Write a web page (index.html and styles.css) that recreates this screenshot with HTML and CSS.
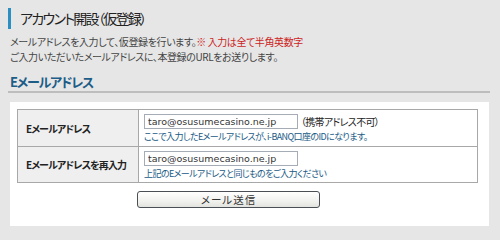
FILE: index.html
```html
<!DOCTYPE html>
<html lang="ja">
<head>
<meta charset="utf-8">
<title>アカウント開設（仮登録）</title>
<link rel="stylesheet" href="styles.css">
</head>
<body>
<div class="page">
  <h1 class="title">アカウント開設（仮登録）</h1>
  <p class="lead">メールアドレスを入力して、仮登録を行います。<span class="red">※ 入力は全て半角英数字</span><br>ご入力いただいたメールアドレスに、本登録のURLをお送りします。</p>
  <h2 class="sec">Eメールアドレス</h2>
  <div class="panel">
    <table class="form">
      <tr class="row1">
        <th>Eメールアドレス</th>
        <td>
          <div class="line"><span class="input">taro@osusumecasino.ne.jp</span><span class="note">（携帯アドレス不可）</span></div>
          <div class="hint">ここで入力したEメールアドレスが、i-BANQ口座のIDになります。</div>
        </td>
      </tr>
      <tr class="row2">
        <th>Eメールアドレスを再入力</th>
        <td>
          <div class="line"><span class="input">taro@osusumecasino.ne.jp</span></div>
          <div class="hint">上記のEメールアドレスと同じものをご入力ください</div>
        </td>
      </tr>
    </table>
    <div class="actions"><button class="btn" type="button">メール送信</button></div>
  </div>
</div>
</body>
</html>
```

FILE: styles.css
```css
html, body {
  margin: 0;
  padding: 0;
}
body {
  background: #e6e6e6;
  font-family: "Noto Sans CJK JP", "Noto Sans", sans-serif;
  font-feature-settings: "palt";
  color: #444;
  width: 500px;
  height: 240px;
  overflow: hidden;
}
.page {
  padding: 8px 10px 0 8px;
}
.title {
  margin: 0;
  height: 21px;
  line-height: 21px;
  border-left: 3px solid #2b8fc1;
  padding-left: 9px;
  font-size: 14px;
  letter-spacing: -1.7px;
  font-weight: normal;
  color: #222;
}
.lead {
  margin: 5px 0 0 2px;
  font-size: 10px;
  letter-spacing: -0.4px;
  line-height: 15px;
  color: #444;
}
.red {
  color: #cc1f1f;
}
.sec {
  margin: 10px 0 0 0;
  padding: 0 0 2px 2px;
  height: 15px;
  line-height: 15px;
  font-size: 13px;
  letter-spacing: -1.2px;
  font-weight: bold;
  color: #1d5d88;
  border-bottom: 2px solid #bdbdbd;
  width: 480px;
}
.panel {
  margin: 9px 0 0 2px;
  width: 479px;
  height: 124px;
  background: #fff;
  box-sizing: border-box;
  padding: 7px 0 0 7px;
}
.form {
  border-collapse: collapse;
  width: 461px;
  border: 1px solid #9a9a9a;
}
.form th {
  width: 112px;
  background: #efefef;
  border: 1px solid #a8a8a8;
  text-align: left;
  padding: 0 0 0 8px;
  font-size: 10px;
  letter-spacing: -0.9px;
  white-space: nowrap;
  font-weight: bold;
  color: #222;
}
.form td {
  border: 1px solid #a8a8a8;
  padding: 4px 0 0 5px;
  vertical-align: top;
}
.row1 { height: 37px; }
.row2 { height: 36px; }
.line {
  display: flex;
  align-items: center;
  height: 15px;
}
.input {
  display: inline-block;
  box-sizing: border-box;
  width: 154px;
  height: 15px;
  border: 1px solid #a5acb5;
  background: #fff;
  font-family: "DejaVu Sans", sans-serif;
  font-size: 9.5px;
  line-height: 13px;
  padding-left: 3px;
  color: #333;
  font-feature-settings: normal;
}
.note {
  margin-left: 3px;
  font-size: 10px;
  letter-spacing: -0.7px;
  color: #222;
}
.hint {
  margin-top: 2px;
  font-size: 9px;
  letter-spacing: -0.6px;
  line-height: 12px;
  color: #1a5a86;
}
.actions {
  padding: 8px 0 0 120px;
}
.btn {
  display: block;
  width: 183px;
  height: 17px;
  padding: 0;
  border: 1px solid #4a4f55;
  border-radius: 3px;
  background: linear-gradient(#ffffff, #f1f1ee 60%, #e2e2de);
  font-family: "Noto Sans CJK JP", sans-serif;
  font-feature-settings: "palt";
  font-size: 10.5px;
  line-height: 15px;
  color: #333;
  letter-spacing: 1px;
}
```
